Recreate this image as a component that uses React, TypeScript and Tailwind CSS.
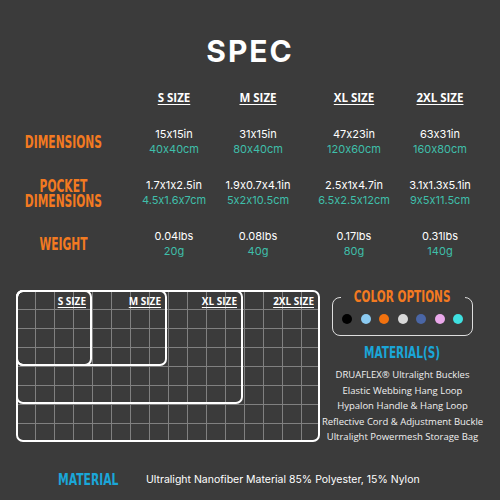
import React from "react";

const cond = { fontFamily: "'Liberation Sans Narrow', 'DejaVu Sans Condensed', sans-serif" };
const open = { fontFamily: "'Open Sans', 'Liberation Sans', sans-serif" };

const cols = "grid grid-cols-[126px_96px_72px_120px_52px]";

const rows = [
  { label: ["DIMENSIONS"], vals: [["15x15in", "40x40cm"], ["31x15in", "80x40cm"], ["47x23in", "120x60cm"], ["63x31in", "160x80cm"]] },
  { label: ["POCKET", "DIMENSIONS"], vals: [["1.7x1x2.5in", "4.5x1.6x7cm"], ["1.9x0.7x4.1in", "5x2x10.5cm"], ["2.5x1x4.7in", "6.5x2.5x12cm"], ["3.1x1.3x5.1in", "9x5x11.5cm"]] },
  { label: ["WEIGHT"], vals: [["0.04lbs", "20g"], ["0.08lbs", "40g"], ["0.17lbs", "80g"], ["0.31lbs", "140g"]] },
];

const dots = ["#000000", "#8ccbf2", "#f2720f", "#d9d9d9", "#4a66a6", "#eaa8ea", "#3fe0e0"];

const materials = [
  "DRUAFLEX® Ultralight Buckles",
  "Elastic Webbing Hang Loop",
  "Hypalon Handle & Hang Loop",
  "Reflective Cord & Adjustment Buckle",
  "Ultralight Powermesh Storage Bag",
];

const boxes = [
  { name: "2XL SIZE", w: 304, h: 152 },
  { name: "XL SIZE", w: 227, h: 114 },
  { name: "M SIZE", w: 151, h: 76 },
  { name: "S SIZE", w: 76, h: 76 },
];

function Grid() {
  const v: number[] = [];
  for (let i = 1; i < 16; i++) v.push(i * 19);
  const h: number[] = [];
  for (let i = 1; i < 8; i++) h.push(i * 19);
  return (
    <div className="relative w-[304px] h-[152px] shrink-0">
      <svg width="304" height="152" className="absolute left-0 top-0">
        {v.map((x) => (
          <line key={"v" + x} x1={x + 0.5} y1={0} x2={x + 0.5} y2={152} stroke="#808080" strokeWidth={1} />
        ))}
        {h.map((y) => (
          <line key={"h" + y} x1={0} y1={y + 0.5} x2={304} y2={y + 0.5} stroke="#808080" strokeWidth={1} />
        ))}
      </svg>
      {boxes.map((b) => (
        <div
          key={b.name}
          className="absolute left-0 top-0 border-2 border-white rounded-[7px] flex justify-end items-start pr-[4px] pt-[3px]"
          style={{ width: b.w, height: b.h }}
        >
          <span className="text-white text-[10px] font-bold underline underline-offset-2 leading-[12px] whitespace-nowrap" style={open}>
            {b.name}
          </span>
        </div>
      ))}
    </div>
  );
}

export default function App() {
  return (
    <div
      className="w-[500px] h-[500px] bg-[#3b3b3b] flex flex-col overflow-hidden [font-feature-settings:'calt'_0]"
      style={{ fontFamily: "Inter, 'Liberation Sans', sans-serif" }}
    >
      <div className="mt-[33px] h-[36px] flex items-center justify-center text-[30px] font-bold text-white tracking-[2px] leading-none">
        SPEC
      </div>

      <div className={`${cols} mt-[17px] h-[24px] items-center`}>
        <div />
        {["S SIZE", "M SIZE", "XL SIZE", "2XL SIZE"].map((s) => (
          <div key={s} className="flex justify-center">
            <span className="text-white text-[11.5px] font-bold underline underline-offset-2 whitespace-nowrap" style={open}>
              {s}
            </span>
          </div>
        ))}
      </div>

      <div className="mt-[6px] flex flex-col">
        {rows.map((r, i) => (
          <div key={i} className={`${cols} h-[51px] items-center`}>
            <div className="flex justify-center">
              <span className="text-[#f37a21] text-[18px] font-bold leading-[15px] scale-x-[0.66] whitespace-nowrap text-center" style={cond}>
                {r.label.map((l, k) => (
                  <React.Fragment key={l}>
                    {k > 0 && <br />}
                    {l}
                  </React.Fragment>
                ))}
              </span>
            </div>
            {r.vals.map((v, j) => (
              <div key={j} className="flex flex-col items-center text-[11px] leading-[15px] whitespace-nowrap">
                <span className="text-white">{v[0]}</span>
                <span className="text-[#3fbfaa]">{v[1]}</span>
              </div>
            ))}
          </div>
        ))}
      </div>

      <div className="mt-[21px] flex pl-[16px]">
        <Grid />
        <div className="ml-[12px] w-[141px] flex flex-col items-center pt-[7px]">
          <div className="relative w-[141px] h-[39px] border-[1.5px] border-[#dddddd] rounded-[8px] flex justify-between items-start px-[9px] pt-[16px]">
            <div className="absolute -top-[10px] left-1/2 -translate-x-1/2 w-[124px] bg-[#3b3b3b] h-[18px] flex items-center justify-center">
              <span className="text-[#f37a21] text-[16px] font-bold scale-x-[0.73] whitespace-nowrap leading-none" style={cond}>
                COLOR OPTIONS
              </span>
            </div>
            {dots.map((c) => (
              <span key={c} className="w-[10px] h-[10px] rounded-full" style={{ backgroundColor: c }} />
            ))}
          </div>
          <div className="mt-[9px] h-[16px] flex items-center">
            <span className="text-[#1aa6d8] text-[16px] font-bold scale-x-[0.73] whitespace-nowrap leading-none" style={cond}>
              MATERIAL(S)
            </span>
          </div>
          <div className="mt-[6px] flex flex-col items-center text-[9.5px] leading-[15.5px] text-[#f0f0f0] whitespace-nowrap" style={open}>
            {materials.map((m) => (
              <span key={m}>{m}</span>
            ))}
          </div>
        </div>
      </div>

      <div className="mt-[25px] h-[20px] flex items-center">
        <div className="w-[146px] pl-[58px] flex items-center">
          <span className="text-[#1aa6d8] text-[16px] font-bold scale-x-[0.75] origin-left whitespace-nowrap leading-none" style={cond}>
            MATERIAL
          </span>
        </div>
        <span className="text-white text-[10.5px] whitespace-nowrap">Ultralight Nanofiber Material 85% Polyester, 15% Nylon</span>
      </div>
    </div>
  );
}
